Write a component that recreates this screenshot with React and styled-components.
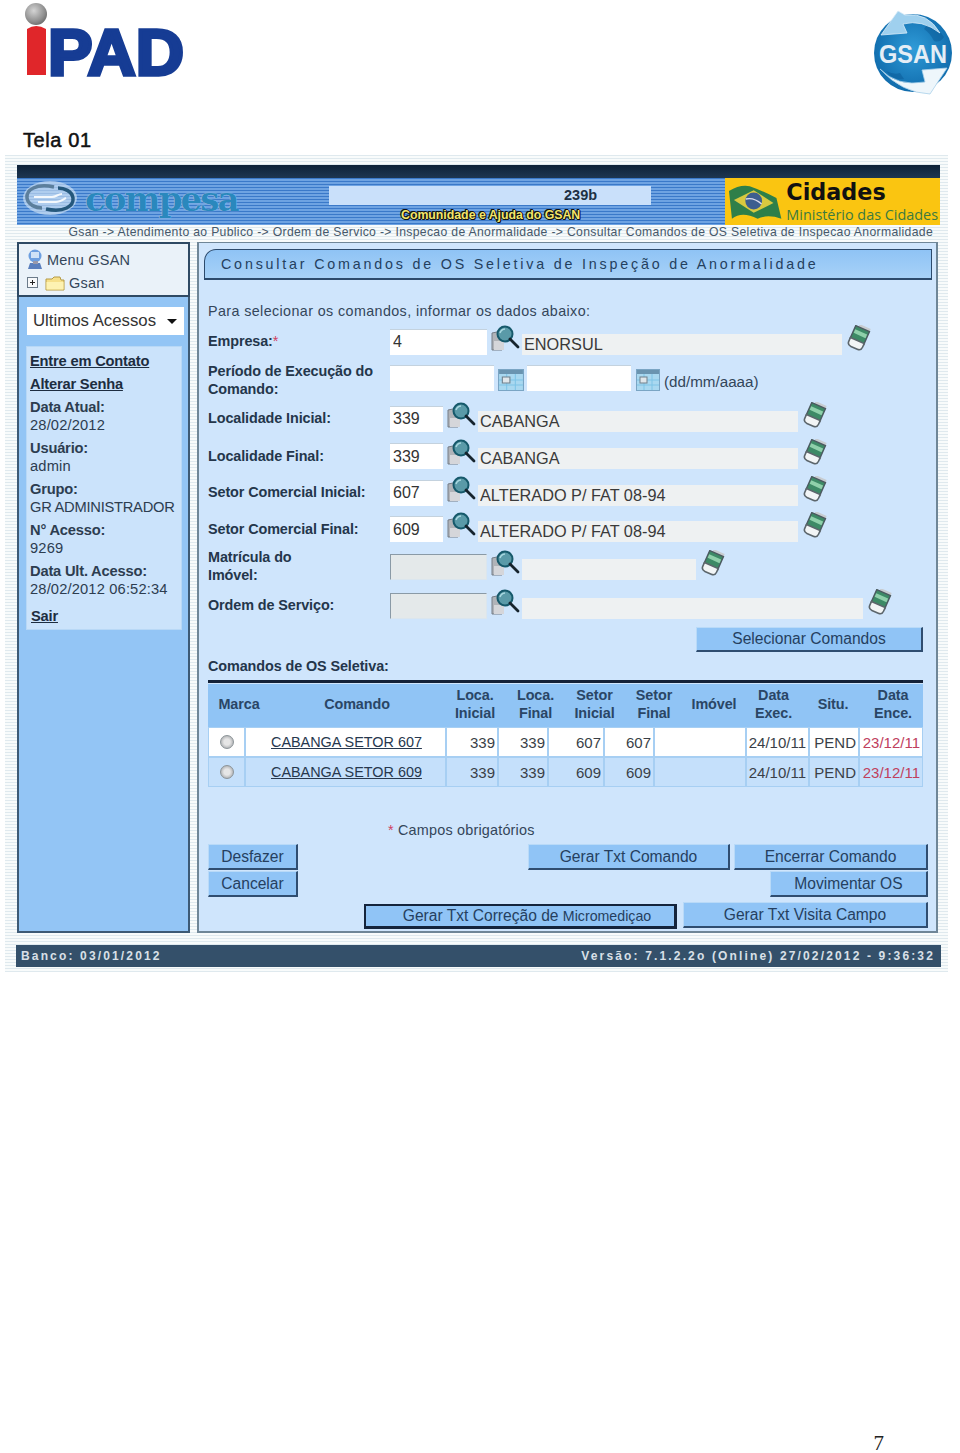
import React from 'react'
import styled, { createGlobalStyle } from 'styled-components'

const GlobalStyle = createGlobalStyle`
  html, body { margin: 0; padding: 0; background: #fff; }
  body { font-family: "Liberation Sans", Arial, sans-serif; color: #26384f; }
  * { box-sizing: border-box; }
`

const Page = styled.div`
  width: 960px;
  height: 1453px;
  display: flex;
  flex-direction: column;
  background: #fff;
`
const TopBar = styled.div`
  height: 126px;
  padding: 2px 4px 0 24px;
  display: flex;
  justify-content: space-between;
  align-items: flex-start;
`
const PageTitle = styled.div`
  height: 29px;
  padding-left: 23px;
  font-size: 20px;
  line-height: 28px;
  letter-spacing: 0.6px;
  color: #111;
  -webkit-text-stroke: 0.5px #111;
`
const Frame = styled.div`
  width: 943px;
  height: 817px;
  margin-left: 5px;
  padding: 10px 8px 5px 12px;
  background: repeating-linear-gradient(180deg, #dfe9ee 0 1px, #f8fbfb 1px 3px);
`
const DarkBar = styled.div`
  height: 13px;
  background: linear-gradient(180deg, #0e2238, #1d3651);
`
const Banner = styled.div`
  height: 47px;
  display: flex;
  background: repeating-linear-gradient(180deg, #3a79c9 0 1px, #6ea3e2 1px 3px);
`
const BrandArea = styled.div`
  width: 312px;
  padding: 2px 0 0 5px;
  display: flex;
  align-items: flex-start;
  gap: 7px;
`
const BrandName = styled.span`
  font-family: "DejaVu Serif", "Liberation Serif", serif;
  font-size: 34px;
  line-height: 38px;
  letter-spacing: -1.9px;
  font-weight: 700;
  color: #2a88bd;
  text-shadow: 0 0 1px #cfe3f5;
`
const BannerMiddle = styled.div`
  width: 396px;
  padding-top: 8px;
  display: flex;
  flex-direction: column;
  align-items: flex-start;
`
const VersionBox = styled.div`
  width: 322px;
  height: 19px;
  padding-left: 235px;
  background: #c9e0fa;
  font-size: 14.5px;
  font-weight: 700;
  line-height: 19px;
  color: #203044;
`
const HelpLink = styled.div`
  margin-top: 3px;
  margin-left: 72px;
  font-size: 12.3px;
  line-height: 14px;
  font-weight: 700;
  color: #f4e66a;
  text-shadow: 1px 0 0 #111, -1px 0 0 #111, 0 1px 0 #111, 0 -1px 0 #111, 1px 1px 0 #111, -1px -1px 0 #111;
`
const MinistryBox = styled.div`
  width: 215px;
  padding: 1px 2px 0 3px;
  background: #fac511;
  display: flex;
  gap: 3px;
`
const MinistryText = styled.div`
  display: flex;
  flex-direction: column;
  color: #1a1a1a;
`
const MinistryTitle = styled.span`
  font-family: "DejaVu Sans", sans-serif;
  font-weight: 700;
  font-size: 22.3px;
  line-height: 26px;
  color: #111;
`
const MinistrySub = styled.span`
  font-family: "Open Sans", sans-serif;
  font-size: 14.4px;
  line-height: 20px;
  color: #3c7a40;
  white-space: nowrap;
`
const Crumb = styled.div`
  height: 17px;
  padding-right: 7px;
  text-align: right;
  font-size: 12.2px;
  line-height: 15px;
  letter-spacing: 0.33px;
  color: #46586a;
  white-space: nowrap;
`
const Columns = styled.div`
  display: flex;
  gap: 7px;
  height: 691px;
`
const Side = styled.div`
  width: 173px;
  background: #93c5f5;
  border: 2px solid #3d5a75;
  border-top: 0;
  display: flex;
  flex-direction: column;
`
const TreeBox = styled.div`
  height: 55px;
  margin: 0 -2px;
  padding: 4px 0 0 8px;
  background: #eaf2f9;
  border: 2px solid #2f4a64;
  font-size: 14.5px;
  color: #33465a;
`
const TreeLine = styled.div`
  height: 23px;
  display: flex;
  align-items: center;
  gap: ${(p) => p.$gap || 4}px;
  letter-spacing: 0.2px;
`
const TreeName = styled.span`
  margin-left: ${(p) => p.$ml || 0}px;
`
const SelectBox = styled.div`
  width: 157px;
  height: 28px;
  margin: 10px 0 0 8px;
  padding: 0 6px;
  background: #fff;
  display: flex;
  justify-content: space-between;
  align-items: center;
  font-size: 16.8px;
  color: #333;
`
const Arrow = styled.span`
  width: 0;
  height: 0;
  margin-right: 1px;
  border-left: 5px solid transparent;
  border-right: 5px solid transparent;
  border-top: 5px solid #111;
`
const InfoBox = styled.div`
  width: 156px;
  height: 284px;
  margin: 11px 0 0 7px;
  padding: 5px 0 0 3px;
  background: #cbe3fb;
  border: 1px solid #b8d8f6;
  font-size: 14.7px;
  line-height: 18px;
  color: #2d3d50;
`
const InfoLink = styled.a`
  display: block;
  height: 23px;
  font-weight: 700;
  letter-spacing: -0.2px;
  text-decoration: underline;
  color: #1d2d40;
  margin-left: ${(p) => p.$indent || 0}px;
  margin-top: ${(p) => p.$top || 0}px;
`
const InfoLabel = styled.div`
  font-weight: 700;
  letter-spacing: -0.2px;
  white-space: nowrap;
`
const InfoValue = styled.div`
  height: 23px;
  letter-spacing: ${(p) => (p.$tight ? -0.25 : 0.15)}px;
  white-space: nowrap;
`
const Main = styled.div`
  width: 741px;
  padding: 6px 4px 0 5px;
  background: #cfe5fc;
  border: 2px solid #6f8697;
  border-top-width: 1px;
`
const TitleBar = styled.div`
  height: 31px;
  padding: 0 0 0 16px;
  background: linear-gradient(180deg, #8fc3f5, #a7d1f7);
  border: 1.5px solid #2c4a6c;
  border-bottom-width: 2px;
  border-top-left-radius: 12px;
  font-size: 14.3px;
  line-height: 29px;
  letter-spacing: 2.8px;
  color: #24405e;
  white-space: nowrap;
`
const Intro = styled.div`
  height: 42px;
  padding: 22px 0 0 4px;
  font-size: 14.3px;
  line-height: 18px;
  letter-spacing: 0.4px;
  color: #34465a;
  white-space: nowrap;
`
const Form = styled.div`
  display: flex;
  flex-direction: column;
`
const Row = styled.div`
  height: ${(p) => p.$h}px;
  display: flex;
  align-items: center;
  padding-left: 4px;
`
const Label = styled.div`
  width: 182px;
  font-size: 14.4px;
  line-height: 18px;
  font-weight: 700;
  color: #24364b;
  letter-spacing: -0.1px;
`
const Star = styled.span`
  color: #d0405f;
  font-weight: 400;
`
const Fields = styled.div`
  display: flex;
  align-items: flex-end;
  margin-bottom: 4px;
`
const CodeInput = styled.input`
  width: ${(p) => p.$w}px;
  height: 26px;
  padding: 0 0 0 3px;
  margin-right: ${(p) => p.$mr || 3}px;
  border: 0;
  border-top: 1px solid #c4d2de;
  background: ${(p) => (p.$off ? '#e4e9ea' : '#fff')};
  ${(p) => p.$off && 'border: 1px solid #8a9aa6; border-right-color: #dbe6ee; border-bottom-color: #dbe6ee;'}
  font-family: inherit;
  font-size: 16px;
  color: #333;
  outline: none;
`
const NameInput = styled.input`
  width: ${(p) => p.$w}px;
  height: 21px;
  padding: 0 0 0 2px;
  margin-left: ${(p) => p.$ml || 0}px;
  border: 0;
  background: #eef1f2;
  font-family: inherit;
  font-size: 16.3px;
  color: #3a3a3a;
  outline: none;
`
const FormatHint = styled.span`
  margin: 0 0 -2px 4px;
  font-size: 15.2px;
  line-height: 22px;
  color: #33465a;
`
const IconSlot = styled.span`
  display: flex;
  margin: 0 0 ${(p) => p.$mb || 0}px ${(p) => p.$ml || 0}px;
`
const SectionTitle = styled.div`
  height: 28px;
  padding: 5px 0 0 4px;
  font-size: 14.4px;
  line-height: 18px;
  font-weight: 700;
  color: #24364b;
  letter-spacing: -0.1px;
`
const ActionRow = styled.div`
  display: flex;
  justify-content: ${(p) => p.$justify || 'flex-end'};
  padding-right: ${(p) => p.$right || 0}px;
  margin-top: ${(p) => p.$top || 0}px;
`
const Btn = styled.button`
  width: ${(p) => p.$w}px;
  height: ${(p) => p.$h || 26}px;
  padding: 0;
  margin-left: ${(p) => p.$ml || 0}px;
  background: #90c4f6;
  border: 0;
  border-top: 1px solid #b9daf8;
  border-left: 1px solid #b9daf8;
  border-right: 2px solid #2f4d70;
  border-bottom: 2px solid #2f4d70;
  font-family: inherit;
  font-size: 15.6px;
  color: #253f60;
  white-space: nowrap;
`
const FocusBtn = styled(Btn)`
  padding-left: 14px;
  margin-top: 2px;
  border: 2px solid #14243c;
  border-bottom-width: 3px;
  border-right-width: 3px;
`
const MicroText = styled.span`
  font-size: 14.2px;
`
const Table = styled.div`
  margin: 0 0 0 4px;
  width: 715px;
  border-top: 3px solid #142238;
`
const HeadRow = styled.div`
  margin-top: 1px;
  height: 43px;
  padding-bottom: 3px;
  display: grid;
  grid-template-columns: 62px 174px 62px 59px 59px 60px 60px 59px 60px 60px;
  background: #90c4f5;
`
const HeadCell = styled.div`
  display: flex;
  align-items: center;
  justify-content: center;
  text-align: center;
  font-size: 14.4px;
  line-height: 18px;
  font-weight: 700;
  letter-spacing: -0.1px;
  color: #2a4666;
`
const BodyRow = styled.div`
  height: 30px;
  padding: 1px 2px 1px 1px;
  display: grid;
  grid-template-columns: 35px 199px 50px 48px 54px 48px 90px 61px 48px 62px;
  column-gap: 2px;
  background: #a7cff3;
`
const Cell = styled.div`
  display: flex;
  align-items: center;
  justify-content: ${(p) => p.$align || 'flex-end'};
  padding: 0 ${(p) => (p.$align ? 0 : 2)}px 0 ${(p) => p.$pl || 0}px;
  background: ${(p) => (p.$alt ? '#c5e0fb' : '#fff')};
  font-size: 15px;
  color: ${(p) => (p.$late ? '#c0405e' : '#3a3f48')};
  white-space: nowrap;
`
const ComandoLink = styled.a`
  font-size: 14.4px;
  color: #27384e;
  text-decoration: underline;
`
const Radio = styled.span`
  width: 14px;
  height: 14px;
  border-radius: 50%;
  border: 1px solid #8c9498;
  background: radial-gradient(circle at 50% 50%, #e6e6e6 0 35%, #b2b4b6 75%, #9a9ea2 100%);
`
const Required = styled.div`
  height: 57px;
  padding: 33px 0 0 184px;
  font-size: 14.4px;
  line-height: 20px;
  letter-spacing: 0.2px;
  color: #34465a;
`
const ButtonArea = styled.div`
  display: flex;
  flex-direction: column;
  gap: 1px;
  padding-left: 4px;
`
const Footer = styled.div`
  height: 22px;
  margin: 12px -1px 0;
  padding: 0 6px 0 5px;
  display: flex;
  justify-content: space-between;
  align-items: center;
  background: #34506a;
  font-size: 12px;
  font-weight: 700;
  letter-spacing: 2.15px;
  color: #d9e0e8;
  white-space: nowrap;
`
const PageNumber = styled.div`
  margin-top: auto;
  align-self: flex-end;
  margin-right: 76px;
  font-family: "Liberation Serif", serif;
  font-size: 21px;
  line-height: 20px;
  color: #222;
`
const GsanSlot = styled.div`
  margin-top: 7px;
`

const IpadLogo = () => (
  <svg width="170" height="92" viewBox="0 0 170 92">
    <defs>
      <radialGradient id="ball" cx="40%" cy="35%" r="70%">
        <stop offset="0%" stopColor="#d4d4d4" />
        <stop offset="70%" stopColor="#8f8f8f" />
        <stop offset="100%" stopColor="#6a6a6a" />
      </radialGradient>
    </defs>
    <circle cx="12" cy="12" r="11" fill="url(#ball)" />
    <path d="M3 27 Q12 21 22 27 V73 H3 Z" fill="#e0262a" />
    <text x="24" y="72.5" fontFamily="Liberation Sans" fontWeight="700" fontSize="64" fill="#163c94" stroke="#163c94" strokeWidth="3.5" textLength="136" lengthAdjust="spacingAndGlyphs">PAD</text>
  </svg>
)

const GsanLogo = () => (
  <svg width="84" height="90" viewBox="0 0 84 90">
    <defs>
      <radialGradient id="globe" cx="50%" cy="45%" r="60%">
        <stop offset="0%" stopColor="#2f9bd8" />
        <stop offset="100%" stopColor="#0d67a8" />
      </radialGradient>
    </defs>
    <circle cx="41" cy="44" r="39" fill="url(#globe)" />
    <path d="M56 14 q10 4 16 14 q-4 6 -10 4 q-4 -8 -10 -12 z M14 62 q8 4 14 2 l4 6 q-10 2 -18 -8 z" fill="#0a5a96" opacity="0.5" />
    <path d="M26 2 L9 26 L35 24 L31 15 Q50 10 68 24 Q56 3 33 6 Z" fill="#9fd0ee" stroke="#d8ebf7" strokeWidth="0.8" />
    <path d="M58 85 Q30 84 8 60 Q25 78 53 73 L50 61 L75 59 Z" fill="#eef6fb" stroke="#a9d0ea" strokeWidth="0.8" />
    <text x="41" y="54" textAnchor="middle" fontFamily="Liberation Sans" fontWeight="700" fontSize="26" fill="#e4eef6" textLength="68" lengthAdjust="spacingAndGlyphs">GSAN</text>
  </svg>
)

const CompesaMark = () => (
  <svg width="56" height="36" viewBox="0 0 56 36">
    <ellipse cx="28" cy="18" rx="27" ry="17" fill="#dbe9f6" opacity="0.6" />
    <path d="M32 7 C14 3 4 10 5 18 C6 25 14 28 20 28" fill="none" stroke="#5c7f9c" strokeWidth="3.5" />
    <path d="M24 29 C42 33 52 26 51 18 C50 11 42 8 36 8" fill="none" stroke="#25587c" strokeWidth="3.5" />
    <path d="M12 17 H30 C34 17 36 14 40 14 M16 22 H34 C38 22 42 19 44 18" fill="none" stroke="#f4f8fc" strokeWidth="2" />
  </svg>
)

const Flag = () => (
  <svg width="56" height="44" viewBox="0 -2 56 44">
    <path d="M1 10 Q12 3 22 5 Q36 10 49 17 L54 38 Q40 33 30 38 Q14 30 4 38 Z" fill="#2e7f49" />
    <path d="M6 19 L26 9 L46 22 L26 32 Z" fill="#d9c93f" />
    <circle cx="26" cy="20" r="8.5" fill="#3d5e8f" />
    <path d="M18 18 Q26 16 34 23" stroke="#dde" strokeWidth="1.4" fill="none" />
  </svg>
)

const LookupIcon = () => (
  <svg width="30" height="29" viewBox="0 0 30 29">
    <path d="M2 9 L12 7 V26 H2 Z" fill="#b0b3b8" stroke="#747c86" strokeWidth="1" />
    <path d="M4 17 H14 V26 H4 Z" fill="#d5d6da" />
    <circle cx="15" cy="10" r="7.5" fill="#5a9aa8" stroke="#16596b" strokeWidth="2" />
    <path d="M10 9 A6 6 0 0 1 15 5" stroke="#a8d8e0" strokeWidth="1.6" fill="none" />
    <path d="M20 15 L28 23" stroke="#16242e" strokeWidth="2.8" strokeLinecap="round" />
  </svg>
)

const CalendarIcon = ({ size = 24 }) => (
  <svg width={size} height="22" viewBox="0 0 24 22" preserveAspectRatio="none">
    <rect x="0.5" y="0.5" width="23" height="21" fill="#a9d8f0" stroke="#7aa5c4" />
    <rect x="1" y="1" width="22" height="4" fill="#6a94b0" />
    <path d="M8 5 V21 M16 5 V21 M1 11 H23 M1 16 H23" stroke="#7fc4e6" strokeWidth="1" />
    <rect x="4" y="8" width="7" height="6" fill="#dfe6ea" stroke="#70808c" />
  </svg>
)

const EraserIcon = () => (
  <svg width="26" height="26" viewBox="0 0 26 26">
    <g transform="rotate(24 13 13)">
      <rect x="8" y="0" width="12" height="4" fill="#c8ccd0" />
      <path d="M5 3 H20 V17 H5 Z" fill="#3d8a66" stroke="#4c5a60" strokeWidth="1.4" />
      <rect x="6" y="6.5" width="13" height="4" fill="#8fd0aa" />
      <path d="M5 16 H20 V20 Q20 24 16 24 H9 Q5 24 5 20 Z" fill="#f2f5f6" stroke="#5c666c" strokeWidth="1.6" />
    </g>
  </svg>
)

const MonitorIcon = () => (
  <svg width="16" height="21" viewBox="0 0 16 21">
    <circle cx="8" cy="7" r="6.5" fill="#6d9fe0" />
    <path d="M4 3 H12 V9 H4 Z" fill="#cfe2f7" />
    <path d="M3 14 H13 L15 20 H1 Z" fill="#5a7fbd" />
    <rect x="6" y="12" width="5" height="3" fill="#99a" />
  </svg>
)

const FolderIcon = () => (
  <svg width="20" height="16" viewBox="0 0 20 16">
    <path d="M1 4 H7 L9 2 H15 L16 5 H19 V15 H1 Z" fill="#f6e08a" stroke="#b59a45" strokeWidth="1" />
    <path d="M1.5 7 H18.5 V14.5 H1.5 Z" fill="#fdf2b2" />
  </svg>
)

const PlusBox = () => (
  <svg width="11" height="11" viewBox="0 0 11 11">
    <rect x="0.5" y="0.5" width="10" height="10" fill="#f7f9fb" stroke="#6b7b8a" />
    <path d="M3 5.5 H8 M5.5 3 V8" stroke="#222" strokeWidth="1" />
  </svg>
)

const LookupFields = ({ code, w = 53, off, name, nameW }) => (
  <Fields>
    <CodeInput $w={w} $off={off} readOnly value={code} />
    <IconSlot $mb={2}><LookupIcon /></IconSlot>
    <NameInput $w={nameW} $ml={2} readOnly value={name} />
    <IconSlot $mb={4} $ml={4}><EraserIcon /></IconSlot>
  </Fields>
)

const infoItems = [
  { label: 'Data Atual:', value: '28/02/2012' },
  { label: 'Usuário:', value: 'admin' },
  { label: 'Grupo:', value: 'GR ADMINISTRADOR', tight: true },
  { label: 'N° Acesso:', value: '9269' },
  { label: 'Data Ult. Acesso:', value: '28/02/2012 06:52:34' },
]

const headers = [
  ['Marca'],
  ['Comando'],
  ['Loca.', 'Inicial'],
  ['Loca.', 'Final'],
  ['Setor', 'Inicial'],
  ['Setor', 'Final'],
  ['Imóvel'],
  ['Data', 'Exec.'],
  ['Situ.'],
  ['Data', 'Ence.'],
]

const rows = [
  { nome: 'CABANGA SETOR 607', setor: '607' },
  { nome: 'CABANGA SETOR 609', setor: '609', alt: true },
]

export default function App() {
  return (
    <Page>
      <GlobalStyle />
      <TopBar>
        <IpadLogo />
        <GsanSlot><GsanLogo /></GsanSlot>
      </TopBar>
      <PageTitle>Tela 01</PageTitle>
      <Frame>
        <DarkBar />
        <Banner>
          <BrandArea>
            <CompesaMark />
            <BrandName>compesa</BrandName>
          </BrandArea>
          <BannerMiddle>
            <VersionBox>239b</VersionBox>
            <HelpLink>Comunidade e Ajuda do GSAN</HelpLink>
          </BannerMiddle>
          <MinistryBox>
            <Flag />
            <MinistryText>
              <MinistryTitle>Cidades</MinistryTitle>
              <MinistrySub>Ministério das Cidades</MinistrySub>
            </MinistryText>
          </MinistryBox>
        </Banner>
        <Crumb>Gsan -&gt; Atendimento ao Publico -&gt; Ordem de Servico -&gt; Inspecao de Anormalidade -&gt; Consultar Comandos de OS Seletiva de Inspecao Anormalidade</Crumb>
        <Columns>
          <Side>
            <TreeBox>
              <TreeLine>
                <MonitorIcon />
                <TreeName>Menu GSAN</TreeName>
              </TreeLine>
              <TreeLine $gap={7}>
                <PlusBox />
                <FolderIcon />
                <TreeName $ml={-3}>Gsan</TreeName>
              </TreeLine>
            </TreeBox>
            <SelectBox>
              <span>Ultimos Acessos</span>
              <Arrow />
            </SelectBox>
            <InfoBox>
              <InfoLink>Entre em Contato</InfoLink>
              <InfoLink>Alterar Senha</InfoLink>
              {infoItems.map((item) => (
                <div key={item.label}>
                  <InfoLabel>{item.label}</InfoLabel>
                  <InfoValue $tight={item.tight}>{item.value}</InfoValue>
                </div>
              ))}
              <InfoLink $indent={1} $top={4}>Sair</InfoLink>
            </InfoBox>
          </Side>
          <Main>
            <TitleBar>Consultar Comandos de OS Seletiva de Inspeção de Anormalidade</TitleBar>
            <Intro>Para selecionar os comandos, informar os dados abaixo:</Intro>
            <Form>
              <Row $h={38}>
                <Label>Empresa:<Star>*</Star></Label>
                <LookupFields code="4" w={97} name="ENORSUL" nameW={320} />
              </Row>
              <Row $h={39}>
                <Label>Período de Execução do<br />Comando:</Label>
                <Fields>
                  <CodeInput $w={104} $mr={4} readOnly value="" />
                  <CalendarIcon size={26} />
                  <IconSlot $ml={3} />
                  <CodeInput $w={104} $mr={5} readOnly value="" />
                  <CalendarIcon />
                  <FormatHint>(dd/mm/aaaa)</FormatHint>
                </Fields>
              </Row>
              <Row $h={38}>
                <Label>Localidade Inicial:</Label>
                <LookupFields code="339" name="CABANGA" nameW={320} />
              </Row>
              <Row $h={37}>
                <Label>Localidade Final:</Label>
                <LookupFields code="339" name="CABANGA" nameW={320} />
              </Row>
              <Row $h={36}>
                <Label>Setor Comercial Inicial:</Label>
                <LookupFields code="607" name="ALTERADO P/ FAT 08-94" nameW={320} />
              </Row>
              <Row $h={37}>
                <Label>Setor Comercial Final:</Label>
                <LookupFields code="609" name="ALTERADO P/ FAT 08-94" nameW={320} />
              </Row>
              <Row $h={38}>
                <Label>Matrícula do<br />Imóvel:</Label>
                <LookupFields code="" w={97} off name="" nameW={174} />
              </Row>
              <Row $h={40}>
                <Label>Ordem de Serviço:</Label>
                <LookupFields code="" w={97} off name="" nameW={341} />
              </Row>
            </Form>
            <ActionRow $right={9} $top={2}>
              <Btn $w={227} $h={25}>Selecionar Comandos</Btn>
            </ActionRow>
            <SectionTitle>Comandos de OS Seletiva:</SectionTitle>
            <Table>
              <HeadRow>
                {headers.map((h) => (
                  <HeadCell key={h.join()}>
                    <div>{h.map((line) => <div key={line}>{line}</div>)}</div>
                  </HeadCell>
                ))}
              </HeadRow>
              {rows.map((r) => (
                <BodyRow key={r.nome}>
                  <Cell $alt={r.alt} $align="center"><Radio /></Cell>
                  <Cell $alt={r.alt} $align="flex-start" $pl={25}><ComandoLink>{r.nome}</ComandoLink></Cell>
                  <Cell $alt={r.alt}>339</Cell>
                  <Cell $alt={r.alt}>339</Cell>
                  <Cell $alt={r.alt}>{r.setor}</Cell>
                  <Cell $alt={r.alt}>{r.setor}</Cell>
                  <Cell $alt={r.alt} />
                  <Cell $alt={r.alt}>24/10/11</Cell>
                  <Cell $alt={r.alt}>PEND</Cell>
                  <Cell $alt={r.alt} $late>23/12/11</Cell>
                </BodyRow>
              ))}
            </Table>
            <Required><Star>*</Star> Campos obrigatórios</Required>
            <ButtonArea>
              <ActionRow $justify="flex-start">
                <Btn $w={90}>Desfazer</Btn>
                <Btn $w={202} $ml={230}>Gerar Txt Comando</Btn>
                <Btn $w={194} $ml={4}>Encerrar Comando</Btn>
              </ActionRow>
              <ActionRow $justify="flex-start">
                <Btn $w={90}>Cancelar</Btn>
                <Btn $w={158} $ml={472}>Movimentar OS</Btn>
              </ActionRow>
              <ActionRow $justify="flex-start" $top={4}>
                <FocusBtn $w={313} $h={25} $ml={156}>Gerar Txt Correção de <MicroText>Micromediçao</MicroText></FocusBtn>
                <Btn $w={245} $ml={6}>Gerar Txt Visita Campo</Btn>
              </ActionRow>
            </ButtonArea>
          </Main>
        </Columns>
        <Footer>
          <span>Banco: 03/01/2012</span>
          <span>Versão: 7.1.2.2o (Online) 27/02/2012 - 9:36:32</span>
        </Footer>
      </Frame>
      <PageNumber>7</PageNumber>
    </Page>
  )
}
